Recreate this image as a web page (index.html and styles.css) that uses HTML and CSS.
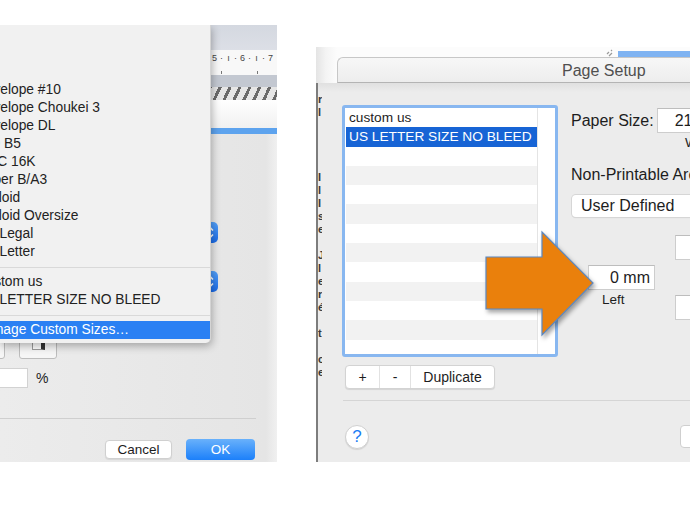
FILE: index.html
```html
<!DOCTYPE html>
<html lang="en">

<head>
    <meta charset="UTF-8">
    <meta name="viewport" content="width=device-width, initial-scale=1.0">
    <title>Page Setup</title>
    <link rel="stylesheet" href="styles.css">
</head>

<body>
    <div class="page">
        <!-- print dialog with the paper size menu open -->
        <div class="print">
            <div class="app">
                <div class="toolbar"></div>
                <div class="ruler">
                    <div class="nums">
                        <span>5</span><span>·</span><span>ı</span><span>·</span><span>6</span><span>·</span><span>ı</span><span>·</span><span>7</span>
                    </div>
                    <div class="ticks"><i></i><i></i></div>
                </div>
                <div class="rulerbar"></div>
                <div class="hatch"></div>
                <div class="docwhite"></div>
                <div class="sheetbar"></div>
                <div class="sheet">
                    <div class="pop">
                        <svg width="21" height="21" viewBox="0 0 21 21"><path d="M10 8.5l3-3 3 3M10 12.5l3 3 3-3" fill="none" stroke="#fff" stroke-width="1.6"/></svg>
                    </div>
                    <div class="pop pop2">
                        <svg width="21" height="21" viewBox="0 0 21 21"><path d="M10 8.5l3-3 3 3M10 12.5l3 3 3-3" fill="none" stroke="#fff" stroke-width="1.6"/></svg>
                    </div>
                    <div class="orient">
                        <div class="obox o1"></div>
                        <div class="obox o2"><span></span></div>
                    </div>
                    <div class="scale">
                        <div class="field"></div>
                        <span>%</span>
                    </div>
                    <div class="sep"></div>
                    <div class="actions">
                        <div class="btn cancel">Cancel</div>
                        <div class="btn ok">OK</div>
                    </div>
                </div>
            </div>

            <div class="menu">
                <div class="item">Envelope #10</div>
                <div class="item">Envelope Choukei 3</div>
                <div class="item">Envelope DL</div>
                <div class="item">ISO B5</div>
                <div class="item">ROC 16K</div>
                <div class="item">Super B/A3</div>
                <div class="item">Tabloid</div>
                <div class="item">Tabloid Oversize</div>
                <div class="item">US Legal</div>
                <div class="item">US Letter</div>
                <div class="msep"></div>
                <div class="item">Custom us</div>
                <div class="item">US LETTER SIZE NO BLEED</div>
                <div class="msep"></div>
                <div class="item hot">Manage Custom Sizes…</div>
            </div>
        </div>

        <!-- custom paper sizes sheet -->
        <div class="setup">
            <div class="titlearea">
                <div class="tab">Page Setup</div>
                <svg class="spin" width="8" height="8" viewBox="0 0 8 8"><path d="M1 5l2-2M3 7l3-3M5 2l1-1" stroke="#9a9a9a" stroke-width="1.2"/></svg>
                <div class="bluebar"></div>
            </div>
            <div class="body">
                <div class="edge">r
l




I
l
I
s
e

J
l
e
r
é

t

c
e</div>
                <div class="main">
                    <div class="top">
                        <div class="list">
                            <div class="rows">
                                <div class="row">custom us</div>
                                <div class="row sel">US LETTER SIZE NO BLEED</div>
                                <div class="row"></div>
                                <div class="row"></div>
                                <div class="row"></div>
                                <div class="row"></div>
                                <div class="row"></div>
                                <div class="row"></div>
                                <div class="row"></div>
                                <div class="row"></div>
                                <div class="row"></div>
                                <div class="row"></div>
                                <div class="row"></div>
                            </div>
                            <div class="scroll"></div>
                        </div>
                        <div class="fields">
                            <div class="paper">
                                <span class="lbl">Paper Size:</span>
                                <div class="input wide">215.9 mm</div>
                            </div>
                            <div class="small wlabel">Width</div>
                            <div class="lbl area">Non-Printable Area:</div>
                            <div class="popup">User Defined</div>
                            <div class="margins">
                                <div class="input m-top"></div>
                                <div class="input m-left">0 mm</div>
                                <div class="small m-leftlbl">Left</div>
                                <div class="input m-bottom"></div>
                            </div>
                        </div>
                    </div>
                    <div class="seg">
                        <span class="s1">+</span><span class="s2">-</span><span class="s3">Duplicate</span>
                    </div>
                    <div class="hr"></div>
                    <div class="bottom">
                        <div class="help">?</div>
                        <div class="rbtn"></div>
                    </div>
                </div>
                <svg class="arrow" width="116" height="112" viewBox="0 0 116 112">
                    <polygon points="2,27 58,27 58,2 109,53 58,105 58,79 2,79" fill="#ea800c" stroke="#5b88c2" stroke-width="1.2"/>
                </svg>
            </div>
        </div>
    </div>
</body>

</html>
```

FILE: styles.css
```css
* {
    margin: 0;
    padding: 0;
    box-sizing: border-box;
}

body {
    background: #fff;
    font-family: "Liberation Sans", Arial, sans-serif;
    color: #1d1d1d;
}

.page {
    width: 690px;
    height: 518px;
    display: flex;
    align-items: flex-start;
    overflow: hidden;
}

/* ---------- left shot ---------- */
.print {
    position: relative;
    flex: none;
    width: 277px;
    height: 437px;
    margin-top: 25px;
    overflow: hidden;
    background: #e9e9e9;
}

.app {
    display: flex;
    flex-direction: column;
    height: 100%;
}

.toolbar {
    height: 25px;
    background: linear-gradient(#d4d8e0, #dcdfe6);
}

.ruler {
    height: 25px;
    background: #f8f8f8;
}

.nums {
    display: flex;
    height: 16px;
    padding-left: 211px;
    font-size: 9px;
    line-height: 16px;
    color: #444;
}

.nums span {
    width: 7px;
    text-align: center;
    flex: none;
}

.ticks {
    display: flex;
    padding-left: 221px;
    gap: 35px;
}

.ticks i {
    width: 1px;
    height: 3px;
    margin-top: 5px;
    background: #777;
}

.rulerbar {
    height: 12px;
    background: #c3c8d1;
}

.hatch {
    height: 13px;
    background: repeating-linear-gradient(115deg, #6a6a6a 0 3px, #e6e6e6 3px 9px);
}

.docwhite {
    height: 28px;
    background: linear-gradient(#fff, #f1f1f1);
}

.sheetbar {
    height: 6px;
    background: #5da3ee;
}

.sheet {
    flex: 1;
    background: linear-gradient(90deg, #ececec, #e5e5e5 96%, #f0f0f0);
}

.pop {
    width: 21px;
    height: 21px;
    margin: 88px 0 0 197px;
    border-radius: 5px;
    background: linear-gradient(#52a0fa, #1a6ae6);
}

.pop svg {
    display: block;
}

.pop2 {
    margin-top: 28px;
}

.orient {
    display: flex;
    margin-top: 40px;
    height: 27px;
}

.obox {
    height: 27px;
    border: 1px solid #bdbdbd;
    border-radius: 3px;
    background: #f6f6f6;
}

.o1 {
    width: 30px;
    margin-left: -25px;
}

.o2 {
    width: 38px;
    margin-left: 14px;
    padding: 6px 0 0 12px;
}

.o2 span {
    display: block;
    width: 13px;
    height: 11px;
    border: 1px solid #9c9c9c;
    border-right: 4px solid #333;
    background: #fff;
}

.scale {
    display: flex;
    align-items: center;
    margin-top: 9px;
    font-size: 14px;
}

.scale .field {
    width: 40px;
    height: 20px;
    margin-left: -12px;
    background: #fff;
    border: 1px solid #d2d2d2;
}

.scale span {
    margin-left: 8px;
}

.sep {
    width: 256px;
    height: 1px;
    margin-top: 30px;
    background: #cfcfcf;
}

.actions {
    display: flex;
    align-items: center;
    margin-top: 20px;
}

.btn {
    text-align: center;
    font-size: 13.5px;
    border-radius: 4px;
}

.cancel {
    width: 67px;
    height: 19px;
    line-height: 18px;
    margin-left: 105px;
    background: #fff;
    border: 1px solid #d0d0d0;
    box-shadow: 0 1px 1px rgba(0, 0, 0, .08);
}

.ok {
    width: 69px;
    height: 21px;
    line-height: 21px;
    margin-left: 14px;
    color: #fff;
    background: linear-gradient(#69b1fb, #1c80fa);
}

/* popup menu lies over the dialog */
.menu {
    position: absolute;
    left: 0;
    top: 0;
    width: 211px;
    padding: 56px 0 4px;
    overflow: hidden;
    background: #f1f1f1;
    border-right: 1px solid #d4d4d4;
    border-bottom-right-radius: 5px;
    box-shadow: 1px 3px 8px rgba(0, 0, 0, .3);
    font-size: 13.8px;
    color: #222;
}

.item {
    height: 18px;
    line-height: 18px;
    margin-left: -23.5px;
    white-space: nowrap;
}

.item.hot {
    background: #2a80f3;
    color: #fff;
}

.msep {
    height: 1px;
    margin: 6px 0 5px;
    background: #d9d9d9;
}

/* ---------- right shot ---------- */
.setup {
    position: relative;
    flex: none;
    width: 374px;
    height: 415px;
    margin: 47px 0 0 39px;
    overflow: hidden;
    display: flex;
    flex-direction: column;
}

.titlearea {
    position: relative;
    height: 36px;
    padding: 10px 0 0 21px;
    background: linear-gradient(90deg, #e4e4e4, #f4f4f4 10px, #fcfcfc 21px);
}

.tab {
    width: 420px;
    height: 26px;
    padding-left: 224px;
    line-height: 25px;
    font-size: 16px;
    color: #4f4f4f;
    background: linear-gradient(#f7f7f7, #ededed);
    border: 1px solid #c7c7c7;
    border-bottom-color: #b4b4b4;
    border-right: none;
    border-top-left-radius: 6px;
}

.spin {
    position: absolute;
    left: 290px;
    top: 2px;
}

.bluebar {
    position: absolute;
    left: 302px;
    top: 4px;
    width: 72px;
    height: 6px;
    background: #7fb3f2;
}

.body {
    position: relative;
    flex: 1;
    display: flex;
    background: linear-gradient(#e0e0e0, #ececec 9px);
}

.edge {
    flex: none;
    width: 6px;
    padding-top: 10px;
    overflow: hidden;
    border-left: 2px solid #7d7d7d;
    white-space: pre;
    font-size: 11px;
    font-weight: bold;
    line-height: 13px;
    color: #3a3a3a;
}

.main {
    flex: 1;
    display: flex;
    flex-direction: column;
}

.top {
    display: flex;
    align-items: flex-start;
}

.list {
    flex: none;
    display: flex;
    width: 216px;
    height: 252px;
    margin: 22px 0 0 20px;
    border: 3px solid #88b7f0;
    border-radius: 3px;
    background: #fff;
    overflow: hidden;
}

.rows {
    flex: 1;
    padding-left: 1px;
    overflow: hidden;
}

.row {
    height: 19.3px;
    line-height: 19px;
    padding-left: 3px;
    font-size: 13.7px;
    white-space: nowrap;
}

.row:nth-child(even) {
    background: #f2f2f2;
}

.row.sel {
    background: #1764d5;
    color: #fff;
}

.scroll {
    width: 18px;
    border-left: 1px solid #e4e4e4;
}

.fields {
    flex: none;
    width: 220px;
    margin: 25px 0 0 12px;
    font-size: 16px;
    display: flex;
    flex-direction: column;
}

.lbl {
    padding-left: 1px;
}

.paper {
    display: flex;
    align-items: center;
    height: 25px;
}

.input {
    height: 25px;
    background: #fff;
    border: 1px solid #cdcdcd;
    border-top-color: #bdbdbd;
    line-height: 23px;
    font-size: 16px;
    white-space: nowrap;
}

.input.wide {
    width: 90px;
    margin-left: 3px;
    padding-left: 17px;
}

.small {
    font-size: 13.5px;
    line-height: 16px;
}

.wlabel {
    margin: 2px 0 0 115px;
}

.area {
    margin-top: 14px;
    line-height: 20px;
    white-space: nowrap;
}

.popup {
    width: 160px;
    height: 22px;
    margin: 10px 0 0 2px;
    padding-left: 9px;
    line-height: 22px;
    background: #fff;
    border-radius: 4px;
    box-shadow: 0 0 0 1px #d6d6d6, 0 1px 1px rgba(0, 0, 0, .12);
}

.margins {
    display: grid;
    grid-template-columns: 18px 67px 20px 60px;
    grid-template-rows: 25px 25px 25px;
    row-gap: 5px;
    margin-top: 18px;
}

.m-top {
    grid-column: 4;
    grid-row: 1;
}

.m-left {
    grid-column: 2;
    grid-row: 2;
    text-align: right;
    padding-right: 4px;
}

.m-leftlbl {
    grid-column: 2;
    grid-row: 3;
    margin-top: -2px;
    padding-left: 14px;
    line-height: 14px;
}

.m-bottom {
    grid-column: 4;
    grid-row: 3;
}

.seg {
    display: flex;
    align-self: flex-start;
    height: 24px;
    margin: 8px 0 0 23px;
    background: #fff;
    border: 1px solid #d3d3d3;
    border-radius: 4px;
    box-shadow: 0 1px 1px rgba(0, 0, 0, .1);
    font-size: 14px;
    line-height: 22px;
    text-align: center;
}

.seg span + span {
    border-left: 1px solid #e2e2e2;
}

.s1 {
    width: 33px;
}

.s2 {
    width: 31px;
}

.s3 {
    width: 84px;
}

.hr {
    height: 1px;
    margin: 11px 0 0 21px;
    background: #d5d5d5;
}

.bottom {
    display: flex;
    margin-top: 24px;
}

.help {
    width: 24px;
    height: 24px;
    margin-left: 23px;
    border-radius: 50%;
    background: #fff;
    border: 1px solid #d0d0d0;
    box-shadow: 0 1px 1px rgba(0, 0, 0, .1);
    text-align: center;
    line-height: 22px;
    font-size: 17px;
    color: #1b7cf4;
}

.rbtn {
    width: 60px;
    height: 23px;
    margin-left: 311px;
    background: #fff;
    border: 1px solid #cfcfcf;
    border-radius: 4px;
}

/* orange callout arrow drawn over the sheet */
.arrow {
    position: absolute;
    left: 168px;
    top: 147px;
    filter: drop-shadow(2px 3px 2px rgba(0, 0, 0, .35));
}
```
